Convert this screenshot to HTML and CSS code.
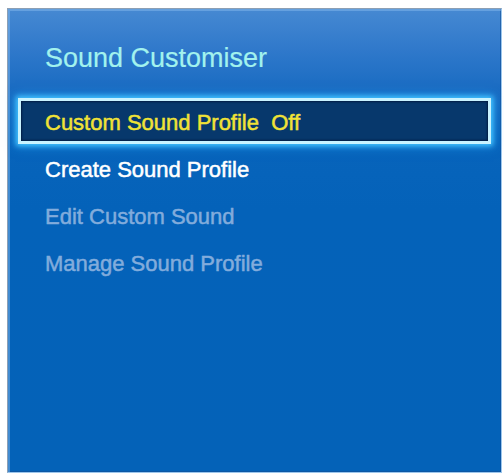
FILE: index.html
```html
<!DOCTYPE html>
<html>
<head>
<meta charset="utf-8">
<link rel="stylesheet" href="styles.css">
</head>
<body>
<div class="panel">
  <div class="title">Sound Customiser</div>
  <ul class="menu">
    <li class="item selected">Custom Sound Profile&nbsp; Off</li>
    <li class="item enabled">Create Sound Profile</li>
    <li class="item disabled">Edit Custom Sound</li>
    <li class="item disabled">Manage Sound Profile</li>
  </ul>
</div>
</body>
</html>
```
FILE: styles.css
```css
html, body {
  margin: 0;
  padding: 0;
  background: #ffffff;
}
body {
  width: 504px;
  height: 476px;
  overflow: hidden;
  font-family: "Liberation Sans", Arial, sans-serif;
}
.panel {
  box-sizing: border-box;
  margin: 8px 0 0 7px;
  width: 495px;
  height: 465px;
  border: 1px solid #8c9fb4;
  border-right-color: #9cc6ec;
  border-bottom-color: #9cc6ec;
  background: linear-gradient(to bottom, #4689d2 0px, #3079cb 40px, #1a6cc2 80px, #0864bb 130px, #0462b9 200px, #0462b8 100%);
  box-shadow: inset 2px 2px 0 rgba(140, 190, 240, 0.45), inset -1px -1px 0 rgba(20, 80, 150, 0.6);
}
.title {
  padding: 36px 0 0 37px;
  height: 27px;
  line-height: 27px;
  font-size: 27px;
  color: #a2f2ee;
  margin-bottom: 26px;
  -webkit-text-stroke: 0.2px currentColor;
}
.menu {
  list-style: none;
  margin: 0;
  padding: 0;
}
.item {
  font-size: 22px;
  height: 47px;
  line-height: 47px;
  padding-left: 37px;
  white-space: nowrap;
  -webkit-text-stroke: 0.5px currentColor;
}
.selected {
  box-sizing: border-box;
  margin: 0 10px 2px 10px;
  height: 46px;
  line-height: 41px;
  padding: 1px 0 0 24px;
  border: 3px solid #c9f3ff;
  background: #07386c;
  color: #f0e236;
  box-shadow: 0 0 5px 2px #44c4ff, 0 0 10px 3px rgba(40, 170, 255, 0.5), inset 0 0 2px 1px rgba(0, 10, 40, 0.6);
}
.enabled {
  color: #ffffff;
}
.disabled {
  color: #82acdc;
}
```
